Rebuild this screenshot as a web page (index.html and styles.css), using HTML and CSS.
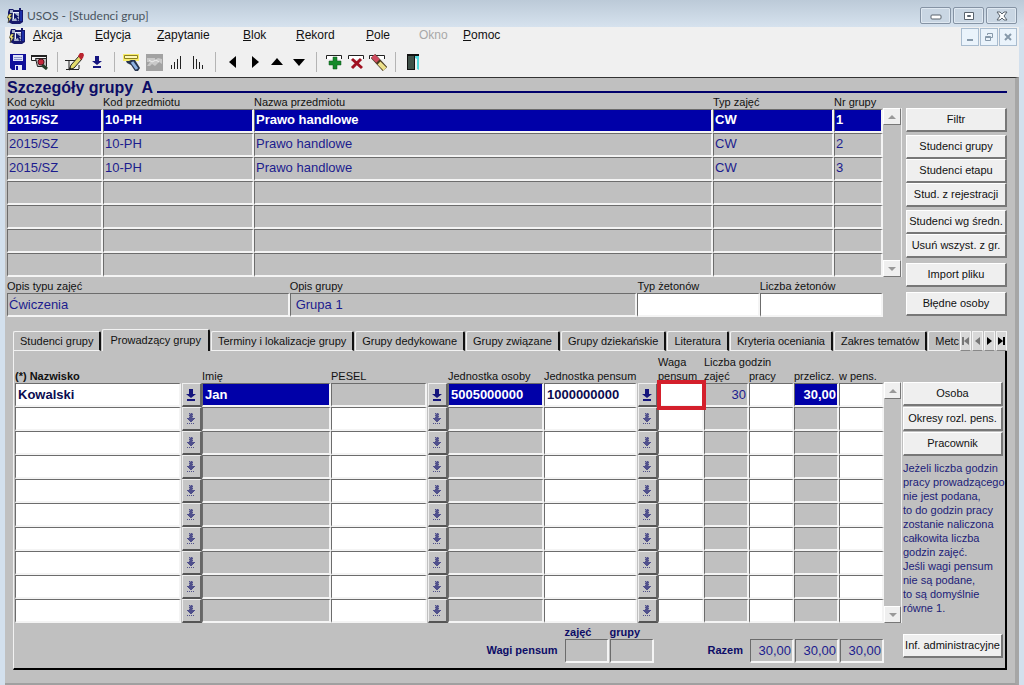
FILE: index.html
```html
<!DOCTYPE html>
<html lang="pl">
<head>
<meta charset="utf-8">
<title>USOS - [Studenci grup]</title>
<link rel="stylesheet" href="styles.css">
</head>
<body>
<svg class="defs" aria-hidden="true">
  <symbol id="app" viewBox="0 0 16 16"><path fill="#16186a" d="M2 1h4l1 1h5V0h2v2h2v12l-3 2H5L1 14V4z"/><path fill="#a9b2cc" d="M3 2h3v3H3zM6 4h6v9H5z"/><path fill="#eef1ff" d="M6 4h6v1H6zM6 5h1v6H6z"/><path fill="#1c2fa8" d="M13 3h2v10h-2z"/><path fill="#10146a" d="M7 5l5 4-2 0 2 3-2 1-1-3-2 1z"/><path fill="#f4e87a" stroke="#222" stroke-width=".5" d="M2 6h3L3 9h2l-4 6 1-5H0z"/></symbol>
  <symbol id="down" viewBox="0 0 10 12"><path d="M3 0h4v5h3L5 9 0 5h3zM1 10h8v2H1z"/></symbol>
  <symbol id="down-off" viewBox="0 0 10 12"><path opacity=".45" d="M3 0h4v5h2v1H8v1H7v1H6v1H4V8H3V7H2V6H1V5h2z"/><path d="M3 0h1v1h1V0h1v1h1v1H6v1h1v1H6v1h3v1H8v1H7v1H6v1H4V8H3V7H2V6H1V5h2V4h1V3H3V2h1V1H3zM1 10h1v1H1zM3 10h1v1H3zM5 10h1v1H5zM7 10h1v1H7z"/></symbol>
  <symbol id="tri-up" viewBox="0 0 8 4"><path d="M4 0l4 4H0z"/></symbol>
  <symbol id="tri-down" viewBox="0 0 8 4"><path d="M0 0h8L4 4z"/></symbol>
</svg>
<div class="window">
  <header class="titlebar">
    <svg class="app-icon"><use href="#app"/></svg>
    <span class="caption">USOS - [Studenci grup]</span>
    <div class="win-buttons">
      <button aria-label="Minimalizuj"><svg width="12" height="8"><rect x="1" y="3" width="10" height="4" rx="1" fill="#fff" stroke="#59636d"/></svg></button>
      <button aria-label="Maksymalizuj"><svg width="12" height="10"><path d="M1.500 1.500h9v7h-9z" fill="#fff" stroke="#59636d"/><path d="M4.500 4.500h3v1h-3z" fill="none" stroke="#59636d"/></svg></button>
      <button aria-label="Zamknij"><svg width="12" height="10"><path d="M1 1h3l2 2 2-2h3L8 5l3 4H8L6 7 4 9H1l3-4z" fill="#fff" stroke="#59636d"/></svg></button>
    </div>
  </header>
  <div class="client">
    <nav class="menubar">
      <svg class="app-icon"><use href="#app"/></svg>
      <div class="menu">
        <button><u>A</u>kcja</button><button><u>E</u>dycja</button><button><u>Z</u>apytanie</button><button><u>B</u>lok</button><button><u>R</u>ekord</button><button><u>P</u>ole</button><button class="okno" disabled>Okno</button><button><u>P</u>omoc</button>
      </div>
      <div class="mdi-buttons">
        <button aria-label="Minimalizuj okno"><svg width="10" height="10"><path d="M2 7h6v2H2z" fill="#8799aa"/></svg></button>
        <button aria-label="Przywróć okno"><svg width="10" height="10"><path d="M3.500 3V1.500h5v4H7M1.500 4.500h5v4h-5zM1 5.500h5" fill="none" stroke="#8799aa"/></svg></button>
        <button aria-label="Zamknij okno"><svg width="10" height="10"><path d="M2 2l6 6M8 2L2 8" stroke="#8799aa" stroke-width="2"/></svg></button>
      </div>
    </nav>
    <div class="toolbar">
      <button aria-label="Zapisz"><svg width="16" height="16"><path fill="#10109a" d="M0 0h16v16H2l-2-2z"/><path fill="#dfe3f8" d="M3 1h10v6H3z"/><path fill="#8c96c8" d="M4 3h8v1H4zM4 5h8v1H4z"/><path fill="#e8ebfa" d="M5 11h7v5H5z"/><path fill="#10109a" d="M6 12h2v4H6z"/></svg></button>
      <button aria-label="Drukuj"><svg width="18" height="16"><path fill="#f6f6f6" stroke="#222" d="M.5 1.500h15v5h-15z"/><path fill="#222" d="M0 1h16v2H0z"/><path fill="#b9b9b9" stroke="#222" d="M4.500 4.500h11v8h-9z"/><circle cx="10" cy="8" r="3" fill="#c3283a" stroke="#5a1420"/><path d="M11 11l5 4" stroke="#243c28" stroke-width="3"/></svg></button>
      <i></i>
      <button aria-label="Edytuj"><svg width="20" height="18"><path d="M0 7.500h12M1 16.500h13M4 7v10M14 12v4" stroke="#222" fill="none"/><path d="M14 3l3 3-8 9-5 2 2-5z" fill="#e3dc6c" stroke="#222"/><path d="M13 3l2-3h3l1 2-1 3-2 2z" fill="#b9242f"/><path d="M4 17l1-3 2 2z" fill="#222"/></svg></button>
      <button aria-label="Lista wartości"><svg width="10" height="12" fill="#151580"><use href="#down"/></svg></button>
      <i></i>
      <button aria-label="Wprowadź zapytanie"><svg width="18" height="17"><path fill="#f7ec6a" d="M0 0h16v7H0z"/><path fill="#fff9b8" stroke="#8c8020" d="M1.500 1.500h13v3h-13z"/><path d="M3 7h3l2-1h4l5 8-2 3h-3L8 11 4 9z" fill="#26344e"/><path d="M9 8l5 7" stroke="#8fb4e4" stroke-width="3"/></svg></button>
      <button aria-label="Wykonaj zapytanie" disabled><svg width="17" height="17"><path fill="#a2a2a2" d="M0 0h17v17H0z"/><path fill="#c9c9c9" d="M1 4h8v2l3-2 4 1v5l-3-2-4 4-3-2-2 2H1l3-4H1z"/><path d="M3 6l3 2 4-2 3 2" stroke="#efefef" fill="none"/></svg></button>
      <button aria-label="Sortuj rosnąco"><svg width="12" height="14"><path d="M1.500 10v4M4.500 7v7M7.500 4v10M10.500 1v13" stroke="#222"/></svg></button>
      <button aria-label="Sortuj malejąco"><svg width="12" height="14"><path d="M1.500 1v13M4.500 4v10M7.500 7v7M10.500 10v4" stroke="#222"/></svg></button>
      <i></i>
      <button aria-label="Poprzedni"><svg width="8" height="14"><path d="M7 1v12L0 7z"/></svg></button>
      <button aria-label="Następny"><svg width="8" height="14"><path d="M1 1v12l7-6z"/></svg></button>
      <button aria-label="W górę"><svg width="14" height="8"><path d="M7 0l6 7H1z"/></svg></button>
      <button aria-label="W dół"><svg width="14" height="8"><path d="M1 1h12L7 8z"/></svg></button>
      <i></i>
      <button aria-label="Wstaw rekord"><svg width="17" height="16"><path d="M.5 5V1.500h15V5" fill="#fff" stroke="#222"/><path fill="#178a2c" stroke="#0d5219" stroke-width=".5" d="M7 3h4v4h4v4h-4v4H7v-4H3V7h4z"/></svg></button>
      <button aria-label="Usuń rekord"><svg width="17" height="16"><path d="M.5 5V1.500h15V5" fill="#fff" stroke="#222"/><path d="M4 5l10 9M13 5l-9 9" stroke="#a01020" stroke-width="3"/></svg></button>
      <button aria-label="Wyczyść rekord"><svg width="18" height="17"><path d="M.5 5V1.500h15V5" fill="#fff" stroke="#222"/><path d="M4 2l12 13" stroke="#4a3a20" stroke-width="6"/><path d="M4 2l5 5" stroke="#cf4a60" stroke-width="5"/><path d="M10 9l6 6" stroke="#ece08a" stroke-width="4"/></svg></button>
      <i></i>
      <button aria-label="Wyjście"><svg width="12" height="16"><path fill="#111" d="M0 0h12v2H8v14H0z"/><path fill="#3f5048" d="M1 2h6v13H1z"/><path fill="#55d9de" d="M8 2h4v14l-2-1V5L8 4z"/></svg></button>
    </div>
    <main>
      <div class="heading"><h1>Szczegóły grupy&nbsp; A</h1><hr></div>
      <section class="groups">
        <table class="grid">
          <colgroup><col class="w-cycle"><col class="w-code"><col><col class="w-type"><col class="w-nr"></colgroup>
          <thead><tr><th>Kod cyklu</th><th>Kod przedmiotu</th><th>Nazwa przedmiotu</th><th>Typ zajęć</th><th>Nr grupy</th></tr></thead>
          <tbody>
            <tr class="current"><td>2015/SZ</td><td>10-PH</td><td>Prawo handlowe</td><td>CW</td><td>1</td></tr>
            <tr><td>2015/SZ</td><td>10-PH</td><td>Prawo handlowe</td><td>CW</td><td>2</td></tr>
            <tr><td>2015/SZ</td><td>10-PH</td><td>Prawo handlowe</td><td>CW</td><td>3</td></tr>
            <tr><td></td><td></td><td></td><td></td><td></td></tr>
            <tr><td></td><td></td><td></td><td></td><td></td></tr>
            <tr><td></td><td></td><td></td><td></td><td></td></tr>
            <tr><td></td><td></td><td></td><td></td><td></td></tr>
          </tbody>
        </table>
        <div class="scrollbar"><button aria-label="Przewiń w górę"><svg><use href="#tri-up"/></svg></button><button aria-label="Przewiń w dół"><svg><use href="#tri-down"/></svg></button></div>
        <div class="side">
          <button class="push">Filtr</button>
          <div class="stack"><button class="push">Studenci grupy</button><button class="push">Studenci etapu</button><button class="push">Stud. z rejestracji</button></div>
          <div class="stack"><button class="push">Studenci wg średn.</button><button class="push">Usuń wszyst. z gr.</button></div>
          <button class="push spaced">Import pliku</button>
          <button class="push spaced">Błędne osoby</button>
        </div>
        <div class="details">
          <label>Opis typu zajęć<input readonly value="Ćwiczenia"></label>
          <label>Opis grupy<input class="indent" readonly value="Grupa 1"></label>
          <label>Typ żetonów<input></label>
          <label>Liczba żetonów<input></label>
        </div>
      </section>
      <section class="tabbed">
        <div class="tabbar">
          <div class="tabs" role="tablist">
            <button role="tab">Studenci grupy</button><button role="tab" class="active" aria-selected="true">Prowadzący grupy</button><button role="tab">Terminy i lokalizacje grupy</button><button role="tab">Grupy dedykowane</button><button role="tab">Grupy związane</button><button role="tab">Grupy dziekańskie</button><button role="tab">Literatura</button><button role="tab">Kryteria oceniania</button><button role="tab">Zakres tematów</button><button role="tab">Metc</button>
          </div>
          <div class="tabnav">
            <button aria-label="Pierwsza" disabled><svg width="7" height="8"><path d="M0 0h2v8H0zM7 0v8L2 4z"/></svg></button>
            <button aria-label="Poprzednia" disabled><svg width="5" height="8"><path d="M5 0v8L0 4z"/></svg></button>
            <button aria-label="Następna"><svg width="5" height="8"><path d="M0 0v8l5-4z"/></svg></button>
            <button aria-label="Ostatnia"><svg width="7" height="8"><path d="M5 0h2v8H5zM0 0v8l5-4z"/></svg></button>
          </div>
        </div>
        <div class="panel">
          <table class="grid lecturers">
            <colgroup><col><col class="w-lov"><col class="w-name"><col class="w-pesel"><col class="w-lov"><col class="w-person"><col class="w-duty"><col class="w-lov"><col class="w-weight"><col class="w-hours"><col class="w-hours"><col class="w-hours"><col class="w-hours"></colgroup>
            <thead>
              <tr><th colspan="8"></th><th>Waga</th><th colspan="4">Liczba godzin</th></tr>
              <tr><th class="key" colspan="2">(*) Nazwisko</th><th>Imię</th><th colspan="2">PESEL</th><th>Jednostka osoby</th><th colspan="2">Jednostka pensum</th><th>pensum</th><th>zajęć</th><th>pracy</th><th>przelicz.</th><th>w pens.</th></tr>
            </thead>
            <tbody id="lecturer-rows"></tbody>
          </table>
          <div class="scrollbar lower"><button aria-label="Przewiń w górę"><svg><use href="#tri-up"/></svg></button><button aria-label="Przewiń w dół"><svg><use href="#tri-down"/></svg></button></div>
          <aside>
            <div class="stack"><button class="push">Osoba</button><button class="push">Okresy rozl. pens.</button><button class="push">Pracownik</button></div>
            <p>Jeżeli liczba godzin<br>pracy prowadzącego<br>nie jest podana,<br>to do godzin pracy<br>zostanie naliczona<br>całkowita liczba<br>godzin zajęć.<br>Jeśli wagi pensum<br>nie są podane,<br>to są domyślnie<br>równe 1.</p>
            <button class="push admin">Inf. administracyjne</button>
          </aside>
          <div class="totals">
            <span class="total-label">Wagi pensum</span>
            <label>zajęć<input readonly></label>
            <label>grupy<input readonly></label>
            <span class="total-label sum">Razem</span>
            <input readonly aria-label="Razem pracy" value="30,00"><input readonly aria-label="Razem przeliczone" value="30,00"><input readonly aria-label="Razem w pensum" value="30,00">
          </div>
        </div>
      </section>
    </main>
  </div>
</div>
<script src="rows.js"></script>
</body>
</html>
```

FILE: styles.css
```css
* { box-sizing: border-box; }
body {
  margin: 0;
  font: 11px/13px "Liberation Sans", Arial, sans-serif;
  color: #111;
}
button, input { font: inherit; color: inherit; margin: 0; padding: 0; border: 0; border-radius: 0; background: none; outline: 0; }
svg { display: block; }
.defs { position: absolute; width: 0; height: 0; }

.window {
  min-height: 100vh;
  display: flex;
  flex-direction: column;
  padding: 0 5px;
  background: #d3e0ed;
}
.titlebar {
  display: flex;
  align-items: center;
  height: 27px;
  margin: 0 -5px;
  padding: 4px 7px 0;
  background: linear-gradient(#bccad8, #d6e2ee);
}
.app-icon { width: 16px; height: 16px; flex: none; }
.caption { margin-left: 4px; font: 12px/16px Lato, sans-serif; color: #4a5560; }
.win-buttons { display: flex; gap: 2px; margin-left: auto; }
.win-buttons button {
  display: grid;
  place-items: center;
  width: 31px;
  height: 17px;
  border: 1px solid #8593a4;
  border-radius: 2px;
  background: #c9d6e3;
  box-shadow: inset 0 0 0 1px #dfe8f1;
}

.client { flex: 1; display: flex; flex-direction: column; background: #f0f0f0; }
.menubar { display: flex; align-items: flex-start; height: 22px; padding: 1px 2px 0 4px; }
.menu {
  display: grid;
  grid-template-columns: 62px 62px 86px 53px 70px 53px 44px auto;
  margin-left: 8px;
  font-size: 12px;
  line-height: 14px;
}
.menu button { text-align: left; white-space: nowrap; }
.menu .okno { color: #a8a8a8; }
.mdi-buttons { display: flex; gap: 1px; margin-left: auto; }
.mdi-buttons button {
  display: grid;
  place-items: center;
  width: 18px;
  height: 18px;
  border: 1px solid #a9bccf;
  background: #eaf3fb;
}
.toolbar { display: flex; align-items: center; height: 28px; padding: 0 2px 2px; }
.toolbar button { display: grid; place-items: center; width: 22px; height: 22px; }
.toolbar i { width: 1px; height: 20px; margin: 0 6px; background: #b4b4b4; }

main {
  flex: 1;
  padding: 1px 8px 0 2px;
  background: #c0c0c0;
  border-top: 1px solid #333;
  border-right: 4px solid #a6a6a6;
  border-bottom: 2px solid #a0a0a0;
}
.heading { display: flex; align-items: center; gap: 4px; height: 17px; }
h1 { margin: 0; font-size: 16px; line-height: 17px; color: #0c0c66; white-space: nowrap; }
hr { flex: 1; height: 2px; margin: 8px 0 0; border: 0; background: #00006a; }

.groups { display: grid; grid-template-columns: 1fr 19px 105px; }
.grid { width: 100%; table-layout: fixed; border-collapse: separate; border-spacing: 0; }
.grid th { height: 13px; padding: 0; font-weight: normal; text-align: left; white-space: nowrap; }
.w-cycle { width: 96px; }
.w-code { width: 151px; }
.w-type { width: 121px; }
.w-nr { width: 49px; }
.grid td, .details input, .totals input, .cell {
  height: 24px;
  border: 1px solid #6c6c6c;
  border-right: 2px solid #f4f4f4;
  border-bottom: 2px solid #f4f4f4;
  font-size: 13px;
  line-height: 18px;
  color: #1c1c8e;
}
.grid td { padding: 0 0 2px 1px; white-space: nowrap; }
.grid .current td { background: #0000a8; color: #fff; font-weight: bold; }

.scrollbar {
  display: flex;
  flex-direction: column;
  justify-content: space-between;
  margin-top: 12px;
  border-right: 1px solid #eee;
}
.scrollbar button {
  display: grid;
  place-items: center;
  height: 17px;
  background: #efefef;
  border: 1px solid #fff;
  border-right-color: #777;
  border-bottom-color: #777;
}
.scrollbar svg { width: 8px; height: 4px; fill: #999; }

.side { grid-row: 1 / 3; grid-column: 3; display: flex; flex-direction: column; gap: 3px; padding: 12px 0 0 4px; }
.stack { display: flex; flex-direction: column; }
.push {
  height: 24px;
  background: #efefef;
  border: 1px solid #fff;
  border-right: 2px solid #777;
  border-bottom: 2px solid #777;
  text-align: center;
  white-space: nowrap;
}
.spaced { margin-top: 2px; }

.details { display: grid; grid-template-columns: 282fr 347fr 122fr 123fr; margin-top: 3px; }
.details label { display: flex; flex-direction: column; }
.details input, .totals input { min-width: 0; width: 100%; padding: 0 2px; background: #fff; }
.details input { padding-left: 1px; }
.details .indent { padding-left: 5px; }
input:read-only { background: #c0c0c0 !important; }

.tabbed { margin: 12px 0 0 6px; }
.tabbar { display: flex; height: 22px; }
.tabs { flex: 1; min-width: 0; display: flex; align-items: flex-end; gap: 1px; overflow: hidden; }
.tabs button {
  flex: none;
  height: 20px;
  padding: 0 6px;
  border: 1px solid #f2f2f2;
  border-right: 2px solid #111;
  border-radius: 2px 2px 0 0;
  white-space: nowrap;
}
.tabs .active { height: 22px; padding: 0 7px; border-bottom: 0; }
.tabs button:last-child { border-right-color: transparent; }
.tabnav { display: flex; gap: 1px; align-items: flex-end; }
.tabnav button { display: grid; place-items: center; width: 11px; height: 20px; border: 1px solid #f4f4f4; background: #d8d8d8; border-bottom-color: #888; }
.tabnav button:disabled { fill: #777; }

.panel {
  display: grid;
  grid-template-columns: 1fr 18px 103px;
  grid-template-rows: auto 1fr;
  padding: 4px 0 5px 1px;
  border-left: 1px solid #f2f2f2;
  border-right: 2px solid #000;
  border-bottom: 2px solid #000;
}
.lecturers th { height: 14px; }
.grid .key { font-weight: bold; }
.w-lov { width: 21px; }
.w-name { width: 129px; }
.w-pesel { width: 96px; }
.w-person { width: 96px; }
.w-duty { width: 93px; }
.w-weight { width: 46px; }
.w-hours { width: 45px; }
.lecturers td { border: 0; padding: 0; }
.cell { display: block; width: 100%; padding: 0 2px; background: #fff; }
.cell.selected { background: #0000a8 !important; color: #fff; font-weight: bold; }
.cell.entered { color: #0b0b50; font-weight: bold; }
.cell.number, .totals > input { text-align: right; padding-right: 1px; }
.lov {
  display: grid;
  place-items: center;
  width: 20px;
  height: 24px;
  margin-left: 1px;
  background: #c6c6c6;
  border: 1px solid #eee;
  border-right: 2px solid #666;
  border-bottom: 2px solid #555;
  fill: #15157c;
}
.lov svg { width: 10px; height: 12px; }
.lov:disabled { fill: #50508c; }
.marked { position: relative; z-index: 1; }
.marked::after {
  content: "";
  position: absolute;
  inset: -3px -2px -3px -1px;
  border: 4px solid #d4202c;
}
.lower { margin-top: 27px; }
aside { grid-column: 3; grid-row: 1 / 3; display: flex; flex-direction: column; padding: 27px 2px 0 1px; }
aside .stack { gap: 1px; }
aside p { margin: 5px -2px 0 0; line-height: 14px; color: #1c1c78; white-space: nowrap; }
.admin { margin-top: auto; margin-bottom: 5px; }
.totals {
  display: flex;
  justify-content: flex-end;
  align-items: flex-end;
  gap: 1px;
  padding-top: 2px;
  color: #0c0c66;
  font-weight: bold;
}
.totals label { display: flex; flex-direction: column; width: 44px; line-height: 14px; }
.totals input { width: 44px; font-weight: normal; }
.total-label { margin: 0 6px 6px 0; }
.sum { margin-left: 53px; }
```

FILE: rows.js
```js
// Editable lecturer records: the first holds data, the others are blank.
const columns = [
  { value: "Kowalski", first: "entered", label: "Nazwisko" },
  { lov: true },
  { value: "Jan", first: "selected", locked: true, label: "Imię" },
  { value: "", firstLocked: true, label: "PESEL" },
  { lov: true },
  { value: "5005000000", first: "selected", locked: true, label: "Jednostka osoby" },
  { value: "1000000000", first: "entered", label: "Jednostka pensum" },
  { lov: true },
  { value: "", mark: true, label: "Waga pensum" },
  { value: "30", first: "number", locked: true, label: "Godziny zajęć" },
  { value: "", label: "Godziny pracy" },
  { value: "30,00", first: "number selected", locked: true, label: "Godziny przeliczone" },
  { value: "", label: "Godziny w pensum" }
];
const body = document.getElementById("lecturer-rows");
for (let r = 0; r < 10; r++) {
  const row = body.insertRow();
  for (const c of columns) {
    const td = row.insertCell();
    if (c.lov) {
      td.innerHTML = `<button class="lov" aria-label="Lista wartości"${r ? " disabled" : ""}><svg><use href="#${r ? "down-off" : "down"}"/></svg></button>`;
      continue;
    }
    const input = document.createElement("input");
    input.className = "cell " + (r === 0 && c.first ? c.first : "");
    input.value = r === 0 ? c.value : "";
    input.readOnly = Boolean(c.locked || (r === 0 && c.firstLocked));
    input.setAttribute("aria-label", c.label);
    td.append(input);
    if (c.mark && r === 0) td.className = "marked";
  }
}
```
